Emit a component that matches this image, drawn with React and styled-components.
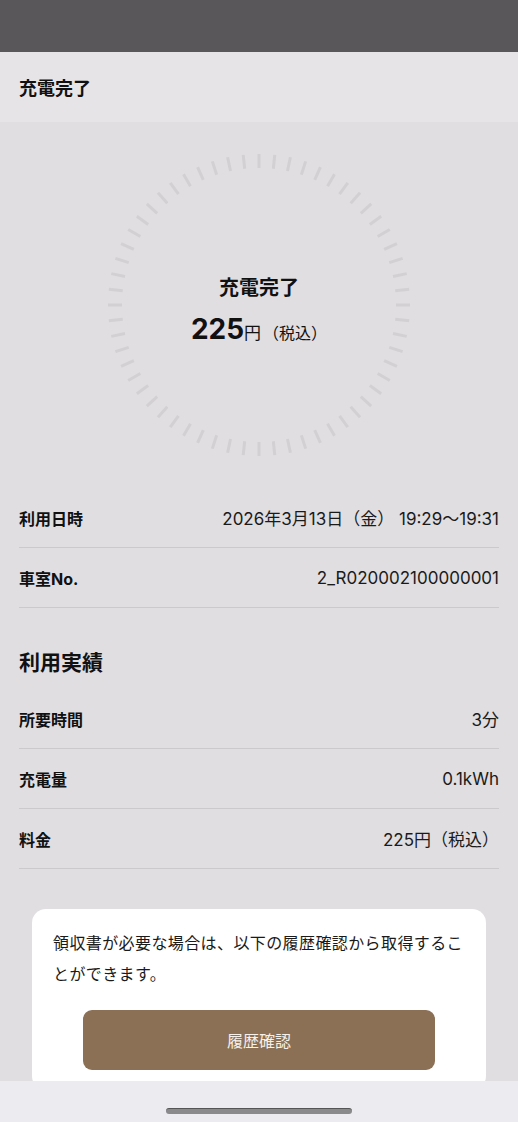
import React from "react";
import styled, { createGlobalStyle } from "styled-components";

const Global = createGlobalStyle`
  html, body { margin: 0; padding: 0; background: #e0dee1; }
  body { font-family: Inter, "Noto Sans CJK JP", sans-serif; color: #111; }
  * { box-sizing: border-box; }
`;

const Page = styled.div`
  width: 518px;
  min-height: 1122px;
  background: #e0dee1;
  display: flex;
  flex-direction: column;
  padding-bottom: 60px;
`;

const StatusBar = styled.div`
  height: 52px;
  background: #59575a;
`;

const Header = styled.header`
  height: 70px;
  background: #e6e4e7;
  display: flex;
  align-items: center;
  padding: 0 19px;
  font-size: 18px;
  font-weight: 700;
`;

const Hero = styled.section`
  padding: 32px 0;
  display: flex;
  justify-content: center;
`;

const Dial = styled.div`
  position: relative;
  width: 302px;
  height: 302px;
`;

const DialSvg = styled.svg`
  position: absolute;
  inset: 0;
`;

const DialCenter = styled.div`
  position: absolute;
  inset: 0;
  display: flex;
  flex-direction: column;
  align-items: center;
  justify-content: center;
  gap: 10px;
  padding-top: 16px;
`;

const DialTitle = styled.div`
  font-size: 20px;
  font-weight: 700;
  line-height: 26px;
`;

const Amount = styled.div`
  display: flex;
  align-items: baseline;
  line-height: 36px;
`;

const AmountNum = styled.span`
  font-size: 28px;
  font-weight: 700;
`;

const AmountUnit = styled.span`
  font-size: 17px;
`;

const AmountTax = styled.span`
  font-size: 16px;
  margin-left: 2px;
`;

const List = styled.div`
  padding: 0 19px;
`;

const Row = styled.div`
  height: 60px;
  display: flex;
  align-items: center;
  justify-content: space-between;
  border-bottom: 1px solid #cbc9cc;
`;

const Label = styled.span`
  font-size: 16px;
  font-weight: 700;
`;

const Value = styled.span`
  font-size: 17px;
  color: #1a1a1a;
`;

const SectionTitle = styled.h2`
  margin: 0;
  padding: 40px 19px 11px;
  font-size: 21px;
  line-height: 30px;
  font-weight: 700;
`;

const Card = styled.div`
  margin: 40px 32px 0;
  background: #ffffff;
  border-radius: 14px;
  padding: 19px 21px 20px;
  display: flex;
  flex-direction: column;
  align-items: center;
`;

const CardText = styled.p`
  margin: 0;
  align-self: stretch;
  font-size: 16px;
  letter-spacing: 0.4px;
  line-height: 31px;
  color: #1a1a1a;
`;

const Button = styled.button`
  margin-top: 20px;
  width: 352px;
  height: 60px;
  border: none;
  border-radius: 9px;
  background: #8b7055;
  color: #f7f1ea;
  font-family: inherit;
  font-size: 16px;
`;

const HomeBar = styled.div`
  position: fixed;
  left: 0;
  right: 0;
  bottom: 0;
  height: 41px;
  background: #ebebf0;
  display: flex;
  justify-content: center;
  align-items: flex-start;
  padding-top: 27px;
`;

const HomeIndicator = styled.div`
  width: 186px;
  height: 6px;
  border-radius: 3px;
  background: #8a8a8c;
  border-top: 1px solid #555;
`;

const ticks = Array.from({ length: 60 }, (_, i) => {
  const a = (i / 60) * Math.PI * 2;
  const c = 151;
  return {
    x1: c + Math.sin(a) * 137,
    y1: c - Math.cos(a) * 137,
    x2: c + Math.sin(a) * 151,
    y2: c - Math.cos(a) * 151,
  };
});

const rows1 = [
  ["利用日時", "2026年3月13日（金） 19:29〜19:31"],
  ["車室No.", "2_R020002100000001"],
];
const rows2 = [
  ["所要時間", "3分"],
  ["充電量", "0.1kWh"],
  ["料金", "225円（税込）"],
];

export default function App() {
  return (
    <Page>
      <Global />
      <StatusBar />
      <Header>充電完了</Header>
      <Hero>
        <Dial>
          <DialSvg width="302" height="302" viewBox="0 0 302 302">
            {ticks.map((t, i) => (
              <line key={i} {...t} stroke="#d2d0d3" strokeWidth="3" />
            ))}
          </DialSvg>
          <DialCenter>
            <DialTitle>充電完了</DialTitle>
            <Amount>
              <AmountNum>225</AmountNum>
              <AmountUnit>円</AmountUnit>
              <AmountTax>（税込）</AmountTax>
            </Amount>
          </DialCenter>
        </Dial>
      </Hero>
      <List>
        {rows1.map(([l, v]) => (
          <Row key={l}>
            <Label>{l}</Label>
            <Value>{v}</Value>
          </Row>
        ))}
      </List>
      <SectionTitle>利用実績</SectionTitle>
      <List>
        {rows2.map(([l, v]) => (
          <Row key={l}>
            <Label>{l}</Label>
            <Value>{v}</Value>
          </Row>
        ))}
      </List>
      <Card>
        <CardText>領収書が必要な場合は、以下の履歴確認から取得することができます。</CardText>
        <Button>履歴確認</Button>
      </Card>
      <HomeBar>
        <HomeIndicator />
      </HomeBar>
    </Page>
  );
}
